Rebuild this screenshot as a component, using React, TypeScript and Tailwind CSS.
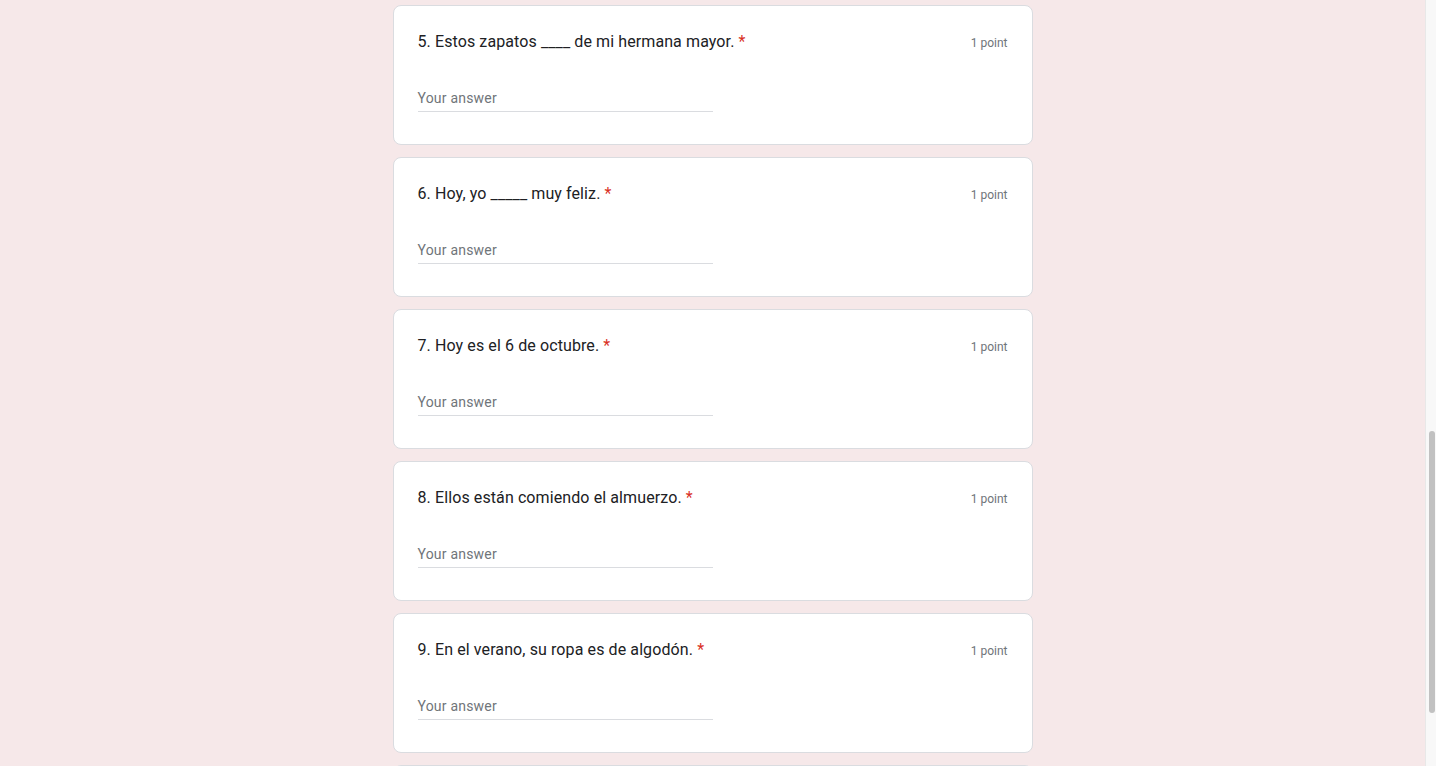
const questions = [
  { n: 5, text: 'Estos zapatos ____ de mi hermana mayor.' },
  { n: 6, text: 'Hoy, yo _____ muy feliz.' },
  { n: 7, text: 'Hoy es el 6 de octubre.' },
  { n: 8, text: 'Ellos están comiendo el almuerzo.' },
  { n: 9, text: 'En el verano, su ropa es de algodón.' },
];

function QuestionCard({ n, text }: { n: number; text: string }) {
  return (
    <div className="w-[640px] shrink-0 rounded-lg border border-[#dadce0] bg-white px-6 pt-6 pb-8">
      <div className="flex h-6 items-center justify-between">
        <div className="text-[16px] tracking-[0.1px] text-[#202124] font-['Roboto',sans-serif]">
          {n}. {text} <span className="text-[#d93025]">*</span>
        </div>
        <div className="pt-[2px] text-[12px] text-[#70757a] font-['Roboto',sans-serif]">1 point</div>
      </div>
      <div className="mt-[26px] flex h-8 w-1/2 items-end border-b border-[#dadce0] pb-[3px]">
        <span className="text-[14px] leading-5 tracking-[0.2px] text-[#70757a] font-['Roboto',sans-serif]">
          Your answer
        </span>
      </div>
    </div>
  );
}

export default function App() {
  return (
    <div className="flex h-[766px] w-full overflow-hidden bg-[#f6e8e9]">
      <main className="flex flex-1 flex-col items-center gap-3 pt-[5px]">
        {questions.map((q) => (
          <QuestionCard key={q.n} n={q.n} text={q.text} />
        ))}
        {/* next card, only its top edge is in view */}
        <div className="h-[140px] w-[640px] shrink-0 rounded-lg border border-[#dadce0] bg-white" />
      </main>

      {/* fake browser scrollbar */}
      <div className="flex w-[11px] shrink-0 justify-center border-l border-[#e8e8e8] bg-[#f8f8f8] pl-[2px]">
        <div className="mt-[431px] h-[282px] w-[6px] rounded-[3px] bg-[#c1c1c1]" />
      </div>
    </div>
  );
}
